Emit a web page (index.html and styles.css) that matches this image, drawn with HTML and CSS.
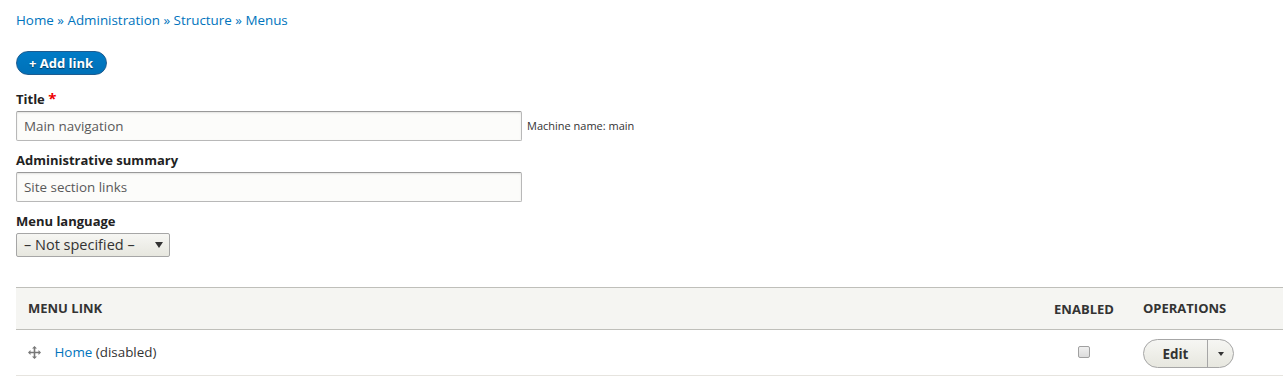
FILE: index.html
```html
<!DOCTYPE html>
<html lang="en">
<head>
  <meta charset="UTF-8" />
  <title>Edit menu - Main navigation</title>
  <link rel="stylesheet" href="styles.css">
</head>
<body>
  <div class="page">
    <nav class="breadcrumb">
      <a href="#">Home</a> » <a href="#">Administration</a> » <a href="#">Structure</a> » <a href="#">Menus</a>
    </nav>

    <div class="actions">
      <a href="#" class="button-action">+ Add link</a>
    </div>

    <div class="form-item first">
      <label for="title">Title <span class="required">*</span></label>
      <div class="inline-row">
        <input type="text" id="title" class="form-text" value="Main navigation">
        <span class="machine-name">Machine name: main</span>
      </div>
    </div>

    <div class="form-item">
      <label for="summary">Administrative summary</label>
      <input type="text" id="summary" class="form-text" value="Site section links">
    </div>

    <div class="form-item">
      <label for="langcode">Menu language</label>
      <div class="select-box">
        <span>– Not specified –</span>
        <span class="caret"></span>
      </div>
    </div>
  </div>

  <table class="menu-table">
    <thead>
      <tr>
        <th class="col-link">Menu link</th>
        <th class="col-enabled">Enabled</th>
        <th class="col-ops">Operations</th>
      </tr>
    </thead>
    <tbody>
      <tr>
        <td class="col-link">
          <span class="handle">
            <svg width="13" height="13" viewBox="0 0 13 13">
              <path d="M6.5 0 L9 2.5 H7.3 V5.7 H10.5 V4 L13 6.5 L10.5 9 V7.3 H7.3 V10.5 H9 L6.5 13 L4 10.5 H5.7 V7.3 H2.5 V9 L0 6.5 L2.5 4 V5.7 H5.7 V2.5 H4 Z" fill="#787878"/>
            </svg>
          </span>
          <a href="#">Home</a> (disabled)
        </td>
        <td class="col-enabled"><span class="checkbox"></span></td>
        <td class="col-ops">
          <div class="dropbutton">
            <a href="#" class="drop-main">Edit</a>
            <span class="drop-toggle"><span class="caret small"></span></span>
          </div>
        </td>
      </tr>
    </tbody>
  </table>
</body>
</html>
```

FILE: styles.css
```css
* { box-sizing: border-box; }
body {
  margin: 0;
  font-family: "Open Sans", "DejaVu Sans", sans-serif;
  font-size: 13.4px;
  line-height: 20px;
  color: #333;
  background: #fff;
}
a { color: #0074bd; text-decoration: none; }
.page {
  padding: 10px 16px 0;
}
.breadcrumb {
  color: #0074bd;
  line-height: 20px;
}
.actions {
  margin-top: 21px;
}
.button-action {
  display: inline-block;
  height: 24px;
  line-height: 22px;
  padding: 0 13px 0 12px;
  border-radius: 12px;
  background: linear-gradient(#007bc6, #0071b8);
  border: 1px solid #1e5c90;
  color: #fff;
  font-weight: 700;
  font-size: 13px;
  text-shadow: 0 1px 1px rgba(0, 0, 0, 0.5);
}
.form-item {
  margin-top: 9px;
}
.form-item.first {
  margin-top: 13px;
}
.form-item label {
  display: block;
  font-weight: 700;
  font-size: 13px;
  color: #222;
  line-height: 20px;
  margin-bottom: 2px;
}
.required {
  color: #e00;
  font-size: 15px;
}
.inline-row {
  display: flex;
  align-items: center;
}
.form-text {
  display: block;
  width: 506px;
  height: 30px;
  padding: 0 7px;
  border: 1px solid #b8b8b8;
  border-top-color: #999;
  border-radius: 2px;
  background: #fcfcfa;
  font-family: inherit;
  font-size: 13.4px;
  color: #595959;
  box-shadow: inset 0 1px 2px rgba(0, 0, 0, 0.1);
}
.machine-name {
  margin-left: 5px;
  font-size: 11px;
  color: #333;
}
.select-box {
  display: flex;
  align-items: center;
  justify-content: space-between;
  width: 154px;
  height: 24px;
  padding: 0 6px 0 7px;
  border: 1px solid #a6a6a6;
  border-radius: 2px;
  background: linear-gradient(#f6f6f3, #e7e7df);
  color: #333;
  font-size: 14.5px;
}
.caret {
  width: 0;
  height: 0;
  border-left: 4px solid transparent;
  border-right: 4px solid transparent;
  border-top: 6px solid #333;
}
.caret.small {
  border-left-width: 3px;
  border-right-width: 3px;
  border-top-width: 4px;
}
.menu-table {
  margin: 30px 0 0 16px;
  width: calc(100% - 16px);
  border-collapse: collapse;
}
.menu-table th {
  height: 42px;
  padding: 0 12px 2px;
  background: #f5f5f2;
  border-top: 1px solid #bfbfba;
  border-bottom: 1px solid #bfbfba;
  text-align: left;
  text-transform: uppercase;
  font-weight: 700;
  font-size: 13px;
  color: #333;
}
.menu-table td {
  height: 46px;
  padding: 0 12px;
  border-bottom: 1px solid #e6e4df;
}
.menu-table .col-enabled {
  width: 86px;
  text-align: center;
  padding: 0 6px;
}
.menu-table .col-ops {
  width: 156px;
  padding-left: 16px;
}
.handle {
  display: inline-block;
  vertical-align: -2px;
  margin-right: 10px;
}
.checkbox {
  display: inline-block;
  width: 12px;
  height: 12px;
  border: 1px solid #a0a0a0;
  border-radius: 2px;
  background: linear-gradient(#f0f0f0, #dcdcdc);
  vertical-align: 0;
}
.dropbutton {
  display: inline-flex;
  height: 29px;
  border: 1px solid #a6a6a6;
  border-radius: 15px;
  background: linear-gradient(#f6f6f3, #e7e7df);
  margin-top: 2px;
}
.drop-main {
  display: flex;
  align-items: center;
  width: 64px;
  justify-content: center;
  color: #333;
  font-weight: 700;
  border-right: 1px solid #a6a6a6;
}
.drop-toggle {
  display: flex;
  align-items: center;
  justify-content: center;
  width: 25px;
}
```
